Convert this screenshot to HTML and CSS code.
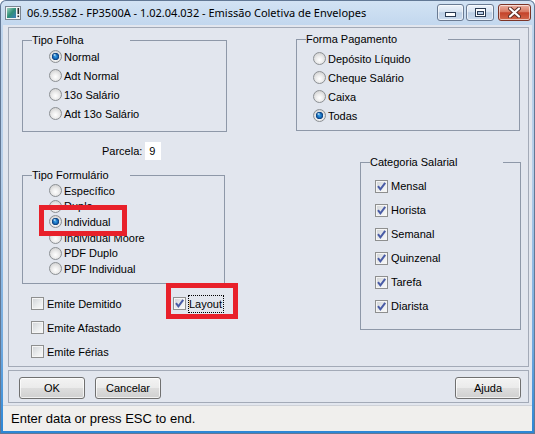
FILE: index.html
```html
<!DOCTYPE html>
<html lang="pt">
<head>
<meta charset="utf-8">
<title>Emissão Coletiva de Envelopes</title>
<link rel="stylesheet" href="styles.css">
</head>
<body>
<div class="window">
  <div class="titlebar">
    <svg class="appicon" width="16" height="14" viewBox="0 0 16 14">
      <defs>
        <linearGradient id="ig" x1="0" y1="0" x2="1" y2="1">
          <stop offset="0" stop-color="#9fd3c0"/>
          <stop offset="0.5" stop-color="#2f8f78"/>
          <stop offset="1" stop-color="#3f7fc0"/>
        </linearGradient>
      </defs>
      <rect x="0.5" y="0.5" width="15" height="13" fill="#f2f4f6" stroke="#7b8692"/>
      <rect x="2" y="2" width="9" height="10" fill="url(#ig)"/>
      <rect x="12.5" y="2" width="1.6" height="6" fill="#2a2a2a"/>
      <rect x="12.5" y="9.5" width="1.6" height="1.6" fill="#2a2a2a"/>
    </svg>
    <span class="title">06.9.5582 - FP3500A - 1.02.04.032 - Emissão Coletiva de Envelopes</span>
    <div class="caption">
      <span class="cbtn min">
        <svg width="11" height="5" viewBox="0 0 11 5"><rect x="0.5" y="0.5" width="10" height="4" fill="#fff" stroke="#2b3b52"/></svg>
      </span>
      <span class="cbtn max">
        <svg width="11" height="9" viewBox="0 0 11 9"><rect x="0.5" y="0.5" width="10" height="8" fill="#fff" stroke="#2b3b52"/><rect x="2.5" y="3.5" width="6" height="3" fill="#b9cde6" stroke="#2b3b52"/></svg>
      </span>
      <span class="cbtn close">
        <svg width="13" height="11" viewBox="0 0 13 11"><path d="M2 1.5 L11 9.5 M11 1.5 L2 9.5" stroke="#5a2a22" stroke-width="4" stroke-linecap="round"/><path d="M2 1.5 L11 9.5 M11 1.5 L2 9.5" stroke="#fff" stroke-width="2.2" stroke-linecap="round"/></svg>
      </span>
    </div>
  </div>

  <div class="client">
    <div class="main">
      <div class="top-row">
        <fieldset class="group folha">
          <legend>Tipo Folha</legend>
          <div class="opts">
            <div class="opt"><span class="radio on"></span>Normal</div>
            <div class="opt"><span class="radio"></span>Adt Normal</div>
            <div class="opt"><span class="radio"></span>13o Salário</div>
            <div class="opt"><span class="radio"></span>Adt 13o Salário</div>
          </div>
        </fieldset>
        <fieldset class="group pagamento">
          <legend>Forma Pagamento</legend>
          <div class="opts">
            <div class="opt"><span class="radio"></span>Depósito Líquido</div>
            <div class="opt"><span class="radio"></span>Cheque Salário</div>
            <div class="opt"><span class="radio"></span>Caixa</div>
            <div class="opt"><span class="radio on"></span>Todas</div>
          </div>
        </fieldset>
      </div>

      <div class="lower">
        <div class="left-col">
          <div class="parcela"><span>Parcela:</span><span class="input">9</span></div>
          <fieldset class="group formulario">
            <legend>Tipo Formulário</legend>
            <div class="opts">
              <div class="opt"><span class="radio"></span>Específico</div>
              <div class="opt"><span class="radio"></span>Duplo</div>
              <div class="opt"><span class="radio on"></span>Individual</div>
              <div class="opt"><span class="radio"></span>Individual Moore</div>
              <div class="opt"><span class="radio"></span>PDF Duplo</div>
              <div class="opt"><span class="radio"></span>PDF Individual</div>
            </div>
          </fieldset>
          <div class="checks">
            <div class="emite">
              <div class="chk"><span class="cb"></span>Emite Demitido</div>
              <div class="chk"><span class="cb"></span>Emite Afastado</div>
              <div class="chk"><span class="cb"></span>Emite Férias</div>
            </div>
            <div class="layout">
              <div class="chk"><span class="cb"><svg width="11" height="11" viewBox="0 0 11 11"><path d="M2 5.2 L4.4 8.4 L9.2 1.8" fill="none" stroke="#4a5ca6" stroke-width="2"/></svg></span><span class="focus">Layout</span></div>
            </div>
          </div>
        </div>

        <fieldset class="group categoria">
          <legend>Categoria Salarial</legend>
          <div class="opts">
            <div class="chk"><span class="cb"><svg width="11" height="11" viewBox="0 0 11 11"><path d="M2 5.2 L4.4 8.4 L9.2 1.8" fill="none" stroke="#4a5ca6" stroke-width="2"/></svg></span>Mensal</div>
            <div class="chk"><span class="cb"><svg width="11" height="11" viewBox="0 0 11 11"><path d="M2 5.2 L4.4 8.4 L9.2 1.8" fill="none" stroke="#4a5ca6" stroke-width="2"/></svg></span>Horista</div>
            <div class="chk"><span class="cb"><svg width="11" height="11" viewBox="0 0 11 11"><path d="M2 5.2 L4.4 8.4 L9.2 1.8" fill="none" stroke="#4a5ca6" stroke-width="2"/></svg></span>Semanal</div>
            <div class="chk"><span class="cb"><svg width="11" height="11" viewBox="0 0 11 11"><path d="M2 5.2 L4.4 8.4 L9.2 1.8" fill="none" stroke="#4a5ca6" stroke-width="2"/></svg></span>Quinzenal</div>
            <div class="chk"><span class="cb"><svg width="11" height="11" viewBox="0 0 11 11"><path d="M2 5.2 L4.4 8.4 L9.2 1.8" fill="none" stroke="#4a5ca6" stroke-width="2"/></svg></span>Tarefa</div>
            <div class="chk"><span class="cb"><svg width="11" height="11" viewBox="0 0 11 11"><path d="M2 5.2 L4.4 8.4 L9.2 1.8" fill="none" stroke="#4a5ca6" stroke-width="2"/></svg></span>Diarista</div>
          </div>
        </fieldset>
      </div>

      <div class="mark mark-individual"></div>
      <div class="mark mark-layout"></div>
    </div>

    <div class="buttons">
      <button class="btn">OK</button>
      <button class="btn cancel">Cancelar</button>
      <button class="btn help">Ajuda</button>
    </div>

    <div class="status">Enter data or press ESC to end.</div>
  </div>
</div>
</body>
</html>
```

FILE: styles.css
```css
* { box-sizing: border-box; }

html, body {
  margin: 0;
  padding: 0;
}

body {
  width: 535px;
  height: 434px;
  overflow: hidden;
  font-family: "Liberation Sans", Arial, sans-serif;
  font-size: 11px;
  color: #000;
  background: #fff;
}

.window {
  width: 535px;
  height: 434px;
  display: flex;
  flex-direction: column;
  background: linear-gradient(#d3e3f4 0%, #bcd3ec 8%, #b4cde8 40%, #6fa9df 80%, #2a86d6 100%);
  border-radius: 6px 6px 0 0;
  box-shadow: inset 0 0 0 1px #627895;
}

/* ---------- title bar ---------- */
.titlebar {
  height: 25px;
  display: flex;
  align-items: center;
  padding-left: 5px;
}

.appicon {
  flex: none;
  margin-top: 1px;
}

.title {
  margin-left: 6px;
  font-family: "Noto Sans", "Liberation Sans", sans-serif;
  font-size: 11px;
  color: #000;
  white-space: nowrap;
}

.caption {
  margin-left: auto;
  margin-right: 4px;
  align-self: flex-start;
  margin-top: 4px;
  display: flex;
}

.cbtn {
  height: 17px;
  display: flex;
  align-items: center;
  justify-content: center;
  border: 1px solid #6a7b93;
  border-radius: 3px;
  background: linear-gradient(#eef3fa 0%, #d7e3f1 45%, #bccfe5 52%, #cddcee 100%);
  box-shadow: inset 0 0 0 1px rgba(255, 255, 255, 0.6);
}

.cbtn.min { width: 27px; align-items: flex-end; padding-bottom: 3px; }
.cbtn.max { width: 28px; margin-left: 2px; }
.cbtn.close {
  width: 33px;
  margin-left: 4px;
  border-color: #7b3427;
  background: linear-gradient(#eab0a2 0%, #d97a63 45%, #c4432a 52%, #d2684c 100%);
}

/* ---------- client area ---------- */
.client {
  flex: 1;
  margin: 0 3px 3px 3px;
  background: #e2e6ee;
  display: flex;
  flex-direction: column;
}

.main {
  position: relative;
  margin: 2px 0 0 5px;
  width: 521px;
  height: 340px;
  border: 1px solid #a3aab7;
}

/* group boxes */
.group {
  margin: 0;
  padding: 0;
  min-width: 0;
  border: 1px solid #8e98a8;
}

.group legend {
  padding: 0;
  margin-left: 9px;
  height: 13px;
  line-height: 13px;
}

.opts {
  display: flex;
  flex-direction: column;
}

.opt {
  display: flex;
  align-items: center;
  gap: 2px;
  white-space: nowrap;
}

.chk {
  display: flex;
  align-items: center;
  gap: 3px;
  height: 24px;
  white-space: nowrap;
}

.radio {
  flex: none;
  width: 13px;
  height: 13px;
  border-radius: 50%;
  border: 1px solid #8c9094;
  background: radial-gradient(circle at 50% 62%, #ffffff 0%, #ececec 40%, #c6c6c6 100%);
}

.radio.on {
  background:
    radial-gradient(circle at 42% 36%, #d8f6ff 0px, rgba(160, 225, 255, 0) 1.6px),
    radial-gradient(circle at 50% 50%, #3aa6ea 0px, #1b6fbe 2px, #0c3f7c 3.4px, rgba(12, 63, 124, 0) 4px),
    radial-gradient(circle at 50% 62%, #ffffff 0%, #ececec 40%, #c6c6c6 100%);
}

.cb {
  flex: none;
  width: 13px;
  height: 13px;
  border: 1px solid #8e8f8f;
  background: linear-gradient(135deg, #cfd2d6 0%, #eceeef 60%, #fafafa 100%);
  box-shadow: inset 0 0 0 1px #f5f5f5;
  display: flex;
}

/* top row */
.top-row {
  display: flex;
  align-items: flex-start;
}

.folha {
  margin: 6px 0 0 13px;
  width: 205px;
}
.folha legend { width: 98px; }
.folha .opts { padding: 0 0 8px 26px; }
.folha .opt { height: 19px; }

.pagamento {
  margin: 5px 0 0 69px;
  width: 224px;
}
.pagamento legend { width: 142px; }
.pagamento .opts { padding: 3px 0 5px 16px; }
.pagamento .opt { height: 19px; }

/* lower area */
.lower {
  display: flex;
  align-items: flex-start;
}

.left-col {
  width: 218px;
  display: flex;
  flex-direction: column;
}

.parcela {
  margin-top: 10px;
  padding-left: 93px;
  height: 18px;
  display: flex;
  align-items: center;
  gap: 3px;
}

.input {
  width: 16px;
  height: 18px;
  line-height: 18px;
  padding-left: 4px;
  background: #fff;
}

.formulario {
  margin: 9px 0 0 13px;
  width: 203px;
}
.formulario legend { width: 98px; }
.formulario .opts { padding: 1px 0 6px 26px; }
.formulario .opt { height: 15.6px; }

.checks {
  margin-top: 8px;
  display: grid;
  grid-template-columns: 164px auto;
}

.emite { padding-left: 22px; }

.focus {
  margin-left: -1px;
  border: 1px dotted #000;
  line-height: 16px;
  padding: 0 1px 0 0;
}

.categoria {
  margin: 24px 0 0 133px;
  width: 161px;
}
.categoria legend { width: 133px; }
.categoria .opts { padding: 5px 0 11px 14px; }

/* annotation marks */
.mark {
  position: absolute;
  border: 5px solid #e8202a;
}
.mark-individual { left: 30px; top: 177px; width: 88px; height: 31px; }
.mark-layout { left: 157px; top: 255px; width: 72px; height: 36px; }

/* buttons panel */
.buttons {
  margin: 3px 0 0 5px;
  width: 521px;
  height: 33px;
  border: 1px solid #a3aab7;
  display: flex;
  align-items: flex-start;
  padding: 6px 7px 0 10px;
}

.btn {
  width: 66px;
  height: 22px;
  padding: 0;
  font-family: "Liberation Sans", Arial, sans-serif;
  font-size: 11px;
  color: #000;
  border: 1px solid #707070;
  border-radius: 3px;
  background: linear-gradient(#f3f3f3 0%, #ebebeb 48%, #dddddd 52%, #d0d0d0 100%);
  box-shadow: inset 0 0 0 1px rgba(255, 255, 255, 0.7);
}

.btn.cancel { margin-left: 10px; }
.btn.help { margin-left: auto; }

/* status bar */
.status {
  margin-top: 2px;
  height: 26px;
  background: #f0efed;
  border-top: 1px solid #cfd2d8;
  padding-left: 8px;
  font-size: 13px;
  line-height: 25px;
  white-space: nowrap;
}
```
